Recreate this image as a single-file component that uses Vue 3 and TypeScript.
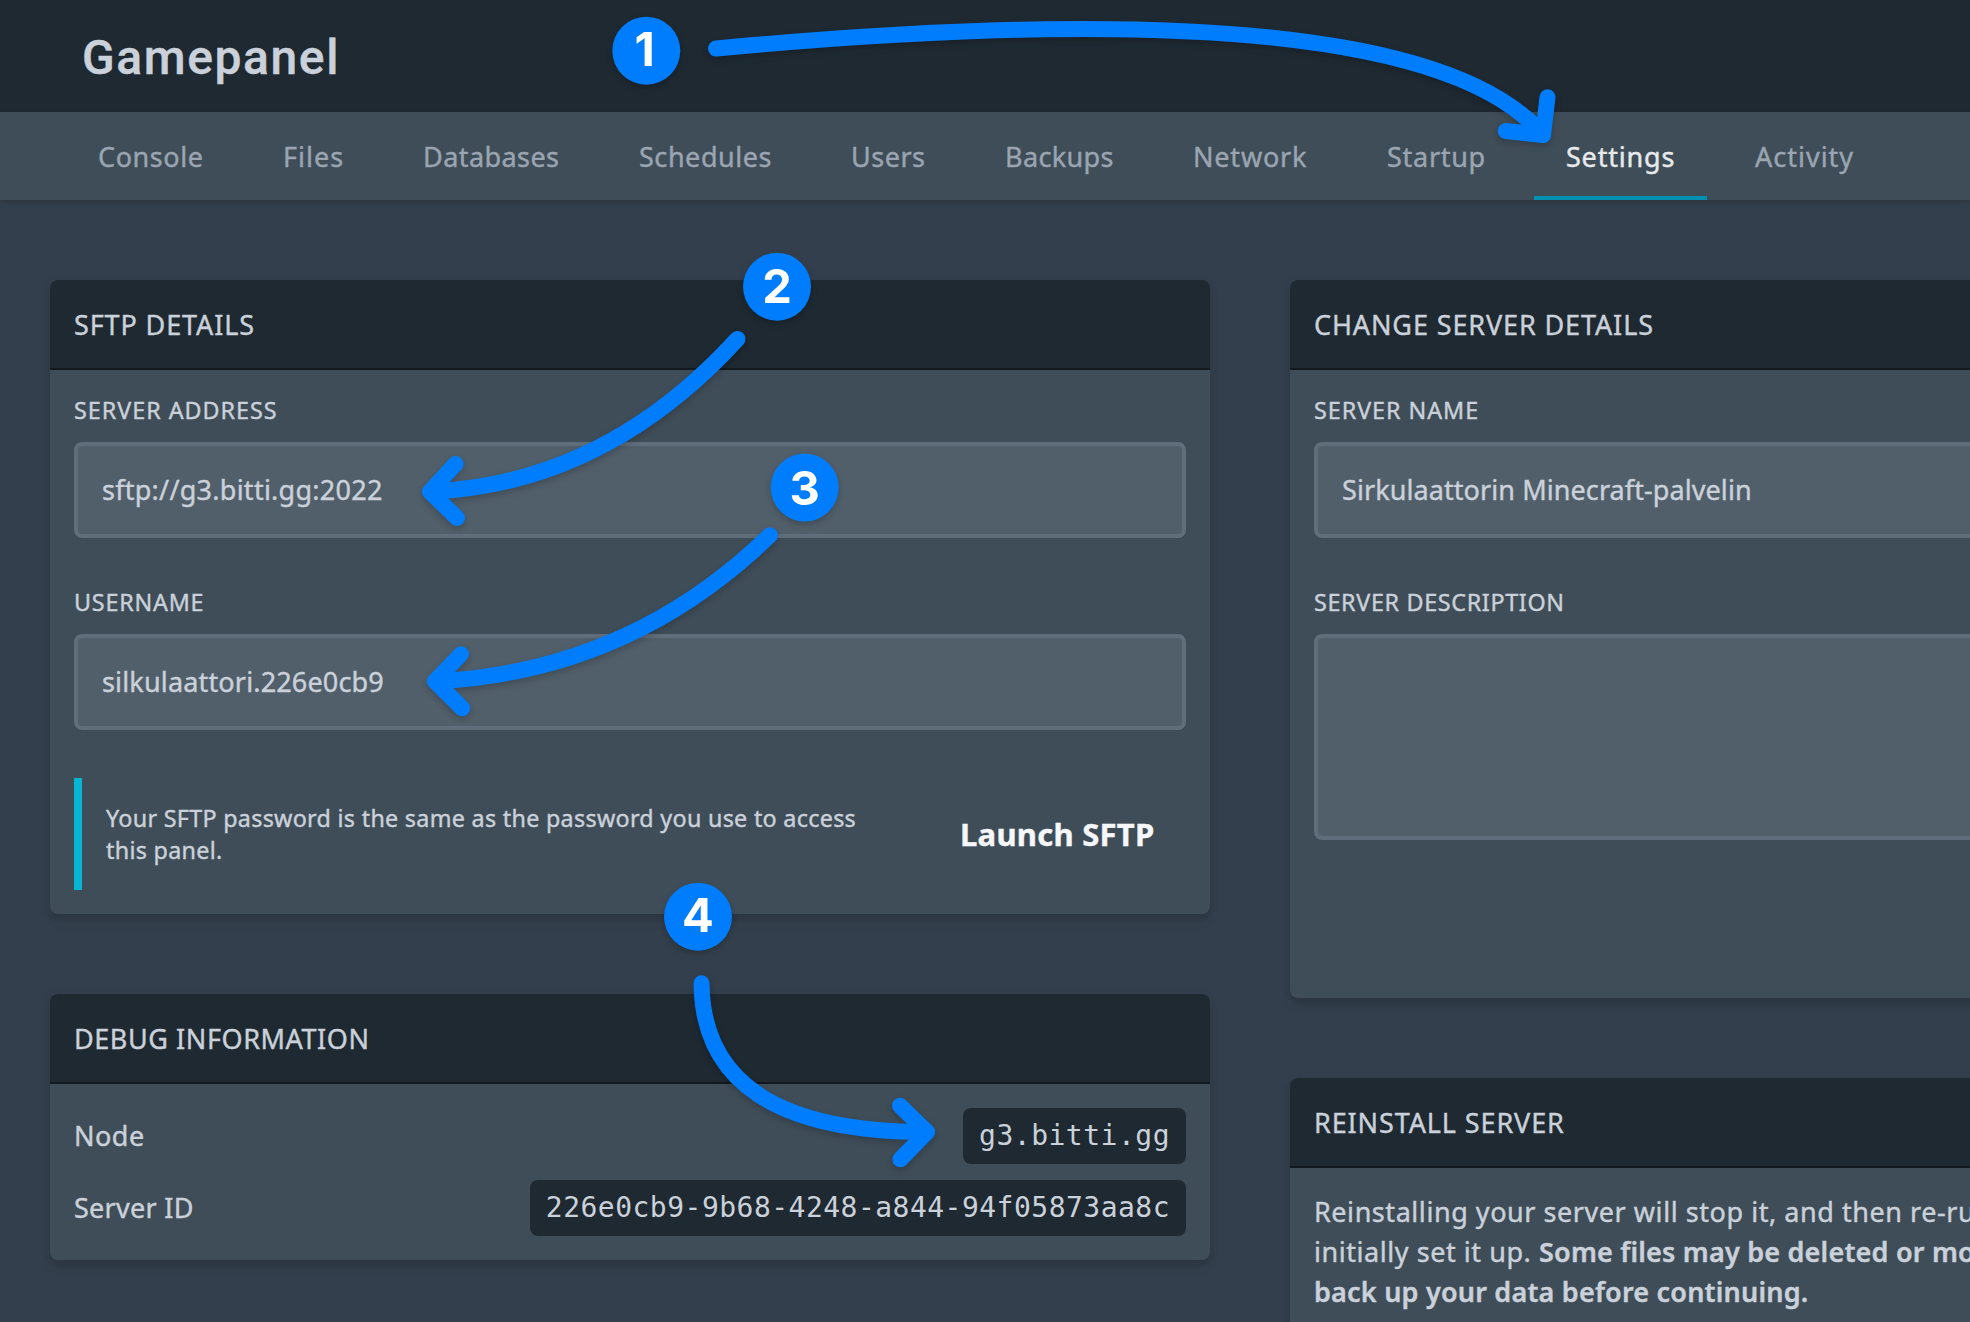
<script setup lang="ts">
interface Label {
  text: string
  tracking: number
}
interface NavItem extends Label {
  width: number
}
interface Field {
  label: Label
  value: Label
}
interface Step {
  n: number
  cx: number
  cy: number
  tx: number
  baseline: number
  curve: string
  head: string
}

const nav: NavItem[] = [
  { text: 'Console', width: 169, tracking: 0.57 },
  { text: 'Files', width: 124, tracking: 1.0 },
  { text: 'Databases', width: 200, tracking: 0.43 },
  { text: 'Schedules', width: 196, tracking: 0.55 },
  { text: 'Users', width: 138, tracking: 0.5 },
  { text: 'Backups', width: 172, tracking: 0.35 },
  { text: 'Network', width: 178, tracking: 0.8 },
  { text: 'Startup', width: 163, tracking: 0.72 },
  { text: 'Settings', width: 173, tracking: 0.8 },
  { text: 'Activity', width: 163, tracking: 1.0 },
]
const active = 'Settings'

const sftpFields: Field[] = [
  {
    label: { text: 'SERVER ADDRESS', tracking: 1.0 },
    value: { text: 'sftp://g3.bitti.gg:2022', tracking: 0.26 },
  },
  {
    label: { text: 'USERNAME', tracking: 0.8 },
    value: { text: 'silkulaattori.226e0cb9', tracking: 0.16 },
  },
]

const debugRows: Field[] = [
  { label: { text: 'Node', tracking: 0.5 }, value: { text: 'g3.bitti.gg', tracking: 0.5 } },
  {
    label: { text: 'Server ID', tracking: 0.27 },
    value: { text: '226e0cb9-9b68-4248-a844-94f05873aa8c', tracking: 0.48 },
  },
]

// Walkthrough callouts drawn on top of the page
const steps: Step[] = [
  {
    n: 1, cx: 646.3, cy: 50.7, tx: 644.6, baseline: 66,
    curve: 'M716 48.5Q1415 -16.5 1543 135',
    head: 'M1547.5 97.3L1543 135L1505.7 131',
  },
  {
    n: 2, cx: 777, cy: 286.7, tx: 777, baseline: 303.3,
    curve: 'M737.4 339Q605 484 430 491.7',
    head: 'M455.5 464L430 491.7L457 518',
  },
  {
    n: 3, cx: 804.7, cy: 487.5, tx: 804.7, baseline: 504.6,
    curve: 'M769.9 535.3Q629 672 435 681.3',
    head: 'M461 654.3L435 681.3L462.2 708.3',
  },
  {
    n: 4, cx: 698, cy: 916.7, tx: 698, baseline: 931.7,
    curve: 'M701.5 983.3Q703 1132 927 1132',
    head: 'M900 1105.7L927 1132L900.4 1159.3',
  },
]

const track = (l: Label) => ({ letterSpacing: `${l.tracking}px` })
</script>

<template>
  <div class="page">
    <header class="topbar"><span class="brand">Gamepanel</span></header>

    <nav class="subnav">
      <a
        v-for="item in nav"
        :key="item.text"
        class="link"
        :class="{ active: item.text === active }"
        :style="{ width: `${item.width}px`, ...track(item) }"
      >{{ item.text }}</a>
    </nav>

    <main class="columns">
      <div class="column">
        <section class="card sftp">
          <h2 class="title">SFTP DETAILS</h2>
          <div class="body">
            <div v-for="f in sftpFields" :key="f.label.text" class="field">
              <label class="label" :style="track(f.label)">{{ f.label.text }}</label>
              <div class="input" :style="track(f.value)">{{ f.value.text }}</div>
            </div>
            <div class="launch-row">
              <div class="note">
                <p>Your SFTP password is the same as the password you use to access this panel.</p>
              </div>
              <button class="launch" type="button">Launch SFTP</button>
            </div>
          </div>
        </section>

        <section class="card">
          <h2 class="title debug-title">DEBUG INFORMATION</h2>
          <div class="body">
            <div v-for="r in debugRows" :key="r.label.text" class="row">
              <span class="key" :style="track(r.label)">{{ r.label.text }}</span>
              <code class="pill" :style="track(r.value)">{{ r.value.text }}</code>
            </div>
          </div>
        </section>
      </div>

      <div class="column">
        <section class="card details">
          <h2 class="title">CHANGE SERVER DETAILS</h2>
          <div class="body">
            <div class="field">
              <label class="label">SERVER NAME</label>
              <div class="input name">Sirkulaattorin Minecraft-palvelin</div>
            </div>
            <div class="field">
              <label class="label description">SERVER DESCRIPTION</label>
              <div class="input area"></div>
            </div>
          </div>
        </section>

        <section class="card">
          <h2 class="title">REINSTALL SERVER</h2>
          <div class="body">
            <p class="copy">
              Reinstalling your server will stop it, and then re-run the installation script that<br>
              initially set it up. <strong>Some files may be deleted or modified during this process, please<br>
              back up your data before continuing.</strong>
            </p>
          </div>
        </section>
      </div>
    </main>

    <svg class="overlay" width="1970" height="1322" viewBox="0 0 1970 1322">
      <g v-for="s in steps" :key="s.n" class="step">
        <path :d="s.curve" />
        <path :d="s.head" />
        <circle :cx="s.cx" :cy="s.cy" r="34" />
        <text :x="s.tx" :y="s.baseline">{{ s.n }}</text>
      </g>
    </svg>
  </div>
</template>

<style>
body {
  background: #333f4c;
}
</style>

<style scoped>
.page {
  position: relative;
  width: 1970px;
  height: 1322px;
  overflow: hidden;
  background: #333f4c;
  color: #cad1da;
  font-family: "Noto Sans", "Open Sans", sans-serif;
  font-size: 27px;
  -webkit-text-stroke: 0.4px currentColor;
}

.topbar {
  display: flex;
  align-items: center;
  box-sizing: border-box;
  height: 112px;
  padding: 2px 0 0 82px;
  background: #1f2931;
}

.brand {
  font-family: Roboto, sans-serif;
  font-size: 48px;
  font-weight: 500;
  letter-spacing: 1.6px;
}

.subnav {
  display: flex;
  gap: 16px;
  height: 88px;
  padding-left: 66px;
  background: #3f4d58;
  box-shadow: 0 2px 6px rgba(0, 0, 0, 0.16);
}

.link {
  box-sizing: border-box;
  flex: none;
  height: 88px;
  padding: 1px 0 0 32px;
  line-height: 88px;
  white-space: nowrap;
  color: #9aa5b1;
}

.link.active {
  color: #e8eaec;
  box-shadow: inset 0 -4px #0490b2;
}

.columns {
  display: flex;
  gap: 80px;
  padding: 80px 0 0 50px;
}

.column {
  display: flex;
  flex: none;
  flex-direction: column;
  gap: 80px;
  width: 1160px;
}

.card {
  flex: none;
  border-radius: 8px;
  background: #3f4d58;
  box-shadow: 0 8px 12px -2px rgba(0, 0, 0, 0.1), 0 4px 8px -2px rgba(0, 0, 0, 0.08), 0 0 12px rgba(0, 0, 0, 0.04);
}

.sftp {
  height: 634px;
}

.details {
  height: 718px;
}

.title {
  box-sizing: border-box;
  height: 90px;
  margin: 0;
  padding: 1px 24px 0;
  border-bottom: 2px solid #12191f;
  border-radius: 8px 8px 0 0;
  background: #1f2931;
  font-size: 27px;
  font-weight: 400;
  line-height: 88px;
  letter-spacing: 0.88px;
}

.debug-title {
  letter-spacing: 0.57px;
}

.body {
  padding: 24px;
}

.field {
  display: flex;
  flex-direction: column;
  gap: 16px;
  margin-bottom: 48px;
}

.label {
  font-size: 23.3px;
  line-height: 32px;
  letter-spacing: 0.97px;
}

.label.description {
  letter-spacing: 0.68px;
}

.input {
  box-sizing: border-box;
  height: 96px;
  padding: 0 24px;
  border: 4px solid #606e7b;
  border-radius: 8px;
  background: #515f6a;
  line-height: 88px;
  letter-spacing: 0.25px;
  white-space: nowrap;
}

.input.name {
  letter-spacing: 0.08px;
}

.input.area {
  height: 206px;
}

.launch-row {
  display: flex;
  align-items: center;
  gap: 32px;
}

.note {
  flex: 1;
  padding: 24px;
  border-left: 8px solid #05b5d3;
  font-size: 23.3px;
  line-height: 32px;
  letter-spacing: 0.3px;
}

.note p {
  margin: 0;
}

.launch {
  flex: none;
  width: 258px;
  padding: 0 0 1px 32px;
  border: 0;
  background: none;
  color: #f5f7fa;
  font: 700 31px/56px "Noto Sans", sans-serif;
  letter-spacing: 0.25px;
  text-align: left;
}

.row {
  display: flex;
  align-items: center;
  justify-content: space-between;
  height: 56px;
}

.row + .row {
  margin-top: 16px;
}

.key {
  padding-bottom: 2px;
}

.pill {
  padding: 0 16px;
  border-radius: 8px;
  background: #1f2931;
  font: 28px/56px "DejaVu Sans Mono", monospace;
  -webkit-text-stroke: 0;
}

.copy {
  margin: 0;
  line-height: 40px;
  letter-spacing: 0.55px;
  white-space: nowrap;
}

.copy strong {
  font-weight: 600;
  letter-spacing: 0.2px;
}

.overlay {
  position: absolute;
  inset: 0;
  pointer-events: none;
}

.step {
  filter: drop-shadow(0 3px 3px rgba(0, 0, 0, 0.2));
}

.step path {
  fill: none;
  stroke: #007dfc;
  stroke-width: 16px;
  stroke-linecap: round;
  stroke-linejoin: round;
}

.step circle {
  fill: #007dfc;
}

.step text {
  fill: #fff;
  font-family: Inter, sans-serif;
  font-size: 47px;
  font-weight: 700;
  text-anchor: middle;
  -webkit-text-stroke: 0;
}
</style>
